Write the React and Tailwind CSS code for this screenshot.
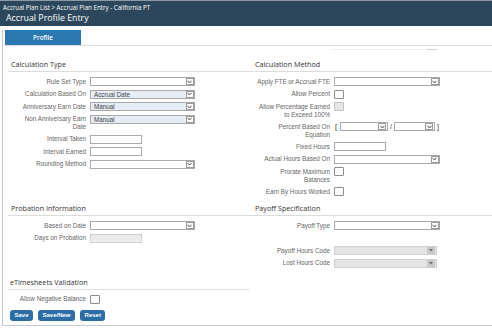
import React from 'react';

const SANS = "font-['Liberation_Sans',Arial,sans-serif]";
const OPEN = "font-['Open_Sans',sans-serif]";

function Chevron() {
  return (
    <svg width="5" height="4" viewBox="0 0 5 4" className="block">
      <path d="M0.5 0.8 L2.5 3 L4.5 0.8" fill="none" stroke="#333" strokeWidth="0.9" />
    </svg>
  );
}

function Select({ value, blue, w = 'w-[105px]' }) {
  return (
    <div className={`${w} h-[9px] border border-[#a9a9a9] flex items-center ${blue ? 'bg-[#e6edf7]' : 'bg-white'}`}>
      <span className="flex-1 pl-[3px] text-[6.3px] leading-[7px] text-[#444] truncate">{value}</span>
      <span className="w-[8px] h-[7px] mr-[0.5px] border border-[#9a9a9a] bg-white flex items-center justify-center">
        <Chevron />
      </span>
    </div>
  );
}

function DisabledSelect() {
  return (
    <div className="w-[103px] h-[9px] border border-[#d0d0d0] bg-[#e4e4e4] flex items-center justify-end">
      <span className="w-[8px] h-[7px] mr-[1px] bg-[#c9c9c9] flex items-center justify-center">
        <svg width="4" height="3" viewBox="0 0 4 3" className="block">
          <path d="M0 0 H4 L2 2.5 Z" fill="#6b6b6b" />
        </svg>
      </span>
    </div>
  );
}

function Input({ disabled }) {
  return (
    <div className={`w-[52px] h-[9px] border ${disabled ? 'border-[#cfcfcf] bg-[#ececec]' : 'border-[#a9a9a9] bg-white'}`} />
  );
}

function Check({ disabled }) {
  return (
    <div className={`w-[10px] h-[9px] border rounded-[1px] ${disabled ? 'border-[#c2c2c2] bg-[#e6e6e6]' : 'border-[#8c8c8c] bg-white'}`} />
  );
}

function Row({ label, lw = 'w-[78px]', children }) {
  return (
    <div className="flex items-start gap-[4px]">
      <div className={`${lw} shrink-0 text-right text-[6.3px] leading-[8px] pt-[0.5px] text-[#666]`}>
        {label}
      </div>
      <div className="flex items-center">{children}</div>
    </div>
  );
}

function Heading({ children, pad = 'pl-[3px]' }) {
  return (
    <div className={`${pad} pb-[2px] border-b border-[#dcdcdc] ${OPEN} text-[7.2px] leading-[10px] text-[#333]`}>
      {children}
    </div>
  );
}

export default function App() {
  const R = 'w-[81px]';
  return (
    <div className={`w-[492px] h-[328px] bg-white overflow-hidden ${SANS}`}>
      {/* Header */}
      <div className={`h-[26px] bg-[#2c475c] border-t border-[#8d9aa6] ${OPEN} text-white`}>
        <div className="pl-[3px] pt-[3px] text-[6.2px] leading-[8px]">
          Accrual Plan List &gt; Accrual Plan Entry - California PT
        </div>
        <div className="pl-[6px] text-[8.8px] leading-[12px]">Accrual Profile Entry</div>
      </div>

      <div className="mt-[4px] ml-[2px] h-[296px] border-l border-b border-[#c8c8c8] flex flex-col">
        {/* Tabs */}
        <div className="flex border-b border-[#dcdcdc]">
          <div className={`ml-[2px] w-[76px] h-[15px] bg-[#2a77b1] text-white ${OPEN} font-semibold text-[6.3px] flex items-center justify-center`}>
            Profile
          </div>
        </div>
        <div className="mt-[3px] ml-[329px] w-[105px] h-[1px] bg-[#efefef] flex justify-end">
          <div className="w-[10px] h-[1px] bg-[#cfcfcf]" />
        </div>

        {/* Form */}
        <div className="mt-[9px] pl-[5px] grid grid-cols-[241px_1fr]">
          {/* Calculation Type */}
          <div>
            <Heading>Calculation Type</Heading>
            <div className="pt-[5px] flex flex-col gap-[3.5px]">
              <Row label="Rule Set Type"><Select /></Row>
              <Row label="Calculation Based On"><Select value="Accrual Date" blue /></Row>
              <Row label="Anniversary Earn Date"><Select value="Manual" blue /></Row>
              <Row label={<>Non Anniversary Earn<br />Date</>}><Select value="Manual" blue /></Row>
              <Row label="Interval Taken"><Input /></Row>
              <Row label="Interval Earned"><Input /></Row>
              <Row label="Rounding Method"><Select /></Row>
            </div>
          </div>

          {/* Calculation Method */}
          <div>
            <Heading pad="pl-[6px]">Calculation Method</Heading>
            <div className="pt-[5px] flex flex-col gap-[3.5px]">
              <Row lw={R} label="Apply FTE or Accrual FTE"><Select w="w-[106px]" /></Row>
              <Row lw={R} label="Allow Percent"><Check /></Row>
              <Row lw={R} label={<>Allow Percentage Earned<br />to Exceed 100%</>}><Check disabled /></Row>
              <Row lw={R} label={<>Percent Based On<br />Equation</>}>
                <span className="text-[7px] leading-[9px] text-[#333] pl-[1px] pr-[3px]">[</span>
                <Select w="w-[48px]" />
                <span className="text-[7px] leading-[9px] text-[#333] px-[2px]">/</span>
                <Select w="w-[41px]" />
                <span className="text-[7px] leading-[9px] text-[#333] pl-[2px]">]</span>
              </Row>
              <Row lw={R} label="Fixed Hours"><Input /></Row>
              <Row lw={R} label="Actual Hours Based On"><Select w="w-[106px]" /></Row>
              <Row lw={R} label={<>Prorate Maximum<br />Balances</>}><Check /></Row>
              <Row lw={R} label="Earn By Hours Worked"><Check /></Row>
            </div>
          </div>

          {/* Probation Information */}
          <div className="mt-[7px]">
            <Heading>Probation Information</Heading>
            <div className="pt-[5px] flex flex-col gap-[3.5px]">
              <Row label="Based on Date"><Select /></Row>
              <Row label="Days on Probation"><Input disabled /></Row>
            </div>
          </div>

          {/* Payoff Specification */}
          <div className="mt-[7px]">
            <Heading pad="pl-[6px]">Payoff Specification</Heading>
            <div className="pt-[5px] flex flex-col gap-[3.5px]">
              <Row lw={R} label="Payoff Type"><Select w="w-[106px]" /></Row>
              <div className="h-[9px]" />
              <Row lw={R} label="Payoff Hours Code"><DisabledSelect /></Row>
              <Row lw={R} label="Lost Hours Code"><DisabledSelect /></Row>
            </div>
          </div>

          {/* eTimesheets Validation */}
          <div className="mt-[9px]">
            <Heading pad="pl-[2px]">eTimesheets Validation</Heading>
            <div className="pt-[5px]">
              <Row label="Allow Negative Balance"><Check /></Row>
            </div>
          </div>
          <div />
        </div>

        {/* Buttons */}
        <div className="mt-[6px] pl-[7px] flex gap-[5px]">
          {['Save', 'Save/New', 'Reset'].map((b) => (
            <button
              key={b}
              className="h-[11px] px-[4.5px] rounded-[3px] bg-[#2b6ea7] text-white font-bold text-[6px] leading-[11px]"
            >
              {b}
            </button>
          ))}
        </div>
      </div>
    </div>
  );
}
